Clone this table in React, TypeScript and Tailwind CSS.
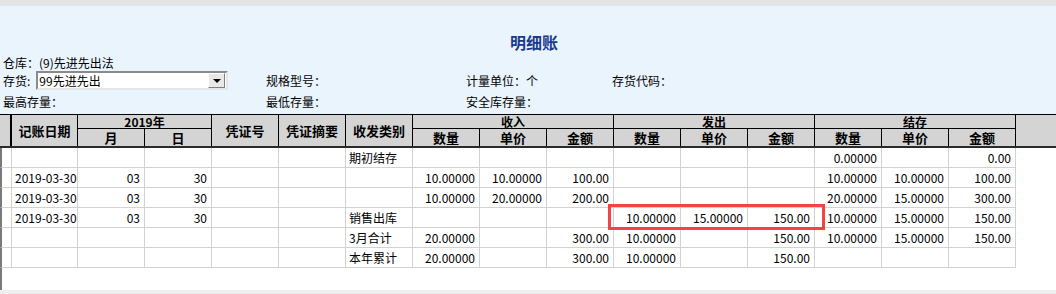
const cols =
  "grid grid-cols-[12px_66px_67px_67px_67px_67px_67px_67px_67px_67px_67px_67px_67px_67px_67px_67px_1fr]";

const rows: string[][] = [
  ["", "", "", "", "", "期初结存", "", "", "", "", "", "", "0.00000", "", "0.00"],
  ["2019-03-30", "03", "30", "", "", "", "10.00000", "10.00000", "100.00", "", "", "", "10.00000", "10.00000", "100.00"],
  ["2019-03-30", "03", "30", "", "", "", "10.00000", "20.00000", "200.00", "", "", "", "20.00000", "15.00000", "300.00"],
  ["2019-03-30", "03", "30", "", "", "销售出库", "", "", "", "10.00000", "15.00000", "150.00", "10.00000", "15.00000", "150.00"],
  ["", "", "", "", "", "3月合计", "20.00000", "", "300.00", "10.00000", "", "150.00", "10.00000", "15.00000", "150.00"],
  ["", "", "", "", "", "本年累计", "20.00000", "", "300.00", "10.00000", "", "150.00", "", "", ""],
];

const Head = ({ children, className = "" }: { children?: React.ReactNode; className?: string }) => (
  <div className={`flex items-center justify-center border-r border-black leading-none ${className}`}>
    {children}
  </div>
);

// group titles sit in the 14px top row
const Group = ({ children, className = "" }: { children?: React.ReactNode; className?: string }) => (
  <div className={`flex items-center justify-center border-r border-b border-black text-[12px] leading-[12px] ${className}`}>
    {children}
  </div>
);

const Sub = ({ children }: { children?: React.ReactNode }) => (
  <div className="flex items-end justify-center border-r border-black pb-[2px] leading-[13px]">{children}</div>
);

const App = () => {
  return (
    <div
      className="relative h-[294px] w-[1056px] overflow-hidden bg-white text-[12px] text-black"
      style={{ fontFamily: '"Noto Sans CJK SC", "Liberation Sans", sans-serif' }}
    >
      <div className="h-[6px] bg-[#e4e4e4]" />

      {/* info panel */}
      <div className="flex h-[108px] flex-col bg-[#eaf4fd]">
        <div className="mt-[28px] flex h-[16px] justify-center pl-[12px] text-[16px] font-bold leading-[16px] text-[#1b3a8a]">
          明细账
        </div>
        <div className="mt-[6px] h-[14px] pl-[3px] leading-[14px]">仓库：(9)先进先出法</div>
        <div className="grid h-[21px] grid-cols-[263px_200px_146px_1fr] items-center pl-[3px] leading-[14px]">
          <div className="flex items-center">
            <span>存货:</span>
            <div className="ml-[6px] flex h-[19px] w-[192px] items-center border-2 border-t-[#8a8a8a] border-l-[#8a8a8a] border-b-[#e6e6e6] border-r-[#e6e6e6] bg-white">
              <span className="flex-1 pl-[1px]">99先进先出</span>
              <div className="mr-[1px] flex h-[15px] w-[17px] items-center justify-center border border-t-white border-l-white border-b-[#808080] border-r-[#808080] bg-[#e8e8e8]">
                <div className="h-0 w-0 border-x-[4px] border-t-[4px] border-x-transparent border-t-black" />
              </div>
            </div>
          </div>
          <div>规格型号：</div>
          <div>计量单位：个</div>
          <div>存货代码：</div>
        </div>
        <div className="mt-[4px] grid h-[14px] grid-cols-[263px_200px_146px_1fr] pl-[3px] leading-[14px]">
          <div>最高存量：</div>
          <div>最低存量：</div>
          <div>安全库存量：</div>
        </div>
      </div>

      {/* table header */}
      <div className={`${cols} grid-rows-[14px_17px] border-t border-b-2 border-black border-b-[#2b2b2b] bg-[#d4d4d4] text-[13px] font-bold`}>
        <div className="row-span-2 border-r-2 border-black" />
        <Head className="row-span-2">记账日期</Head>
        <Group className="col-span-2">2019年</Group>
        <Head className="row-span-2">凭证号</Head>
        <Head className="row-span-2">凭证摘要</Head>
        <Head className="row-span-2">收发类别</Head>
        <Group className="col-span-3">收入</Group>
        <Group className="col-span-3">发出</Group>
        <Group className="col-span-3">结存</Group>
        <div className="row-span-2" />
        <Sub>月</Sub>
        <Sub>日</Sub>
        <Sub>数量</Sub>
        <Sub>单价</Sub>
        <Sub>金额</Sub>
        <Sub>数量</Sub>
        <Sub>单价</Sub>
        <Sub>金额</Sub>
        <Sub>数量</Sub>
        <Sub>单价</Sub>
        <Sub>金额</Sub>
      </div>

      {/* table body */}
      <div className="flex h-[142px] flex-col">
        {rows.map((r, i) => (
          <div key={i} className={`${cols} h-[20px]`}>
            <div className="border-r border-b border-l-2 border-[#d2d2d2] border-l-[#7a7a7a]" />
            {r.map((c, j) => (
              <div
                key={j}
                className={`flex items-center border-r border-b border-[#d2d2d2] leading-none ${
                  j === 0 || j === 5 ? "justify-start pl-[3px]" : "justify-end pr-[4px]"
                }`}
              >
                {c}
              </div>
            ))}
            <div />
          </div>
        ))}
        <div className="flex-1 border-l-2 border-[#7a7a7a]" />
      </div>
      <div className="h-[4px] bg-[#efefef]" />

      {/* highlight */}
      <div className="absolute left-[608px] top-[204px] h-[26px] w-[217px] border-[3px] border-[#f24444]" />
    </div>
  );
};

export default App;
